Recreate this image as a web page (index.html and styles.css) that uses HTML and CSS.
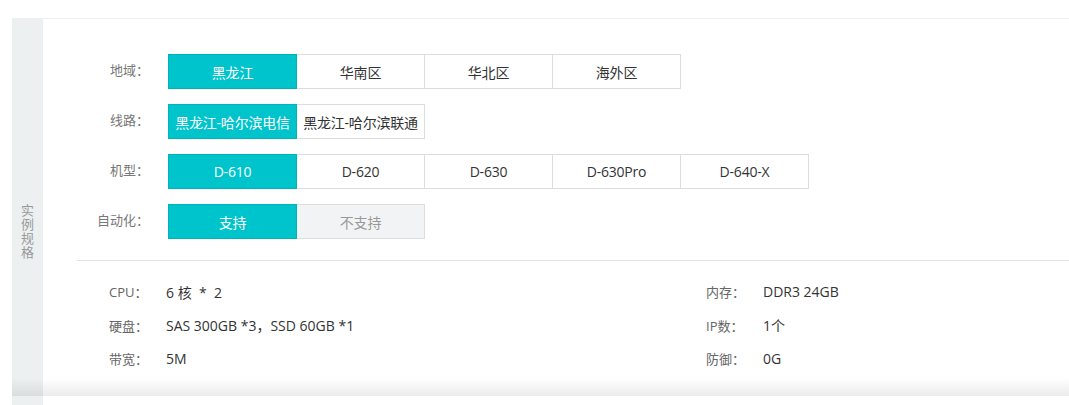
FILE: index.html
```html
<!DOCTYPE html>
<html lang="zh-CN">
  <head>
    <meta charset="UTF-8" />
    <meta name="viewport" content="width=device-width, initial-scale=1.0" />
    <title>实例规格</title>

    <link rel="stylesheet" href="styles.css">
  </head>

  <body>
    <div class="page">
      <div class="panel">
        <div class="side">
          <span class="side-title">实例规格</span>
        </div>
        <div class="main">
          <div class="opt-row">
            <p class="opt-label">地域：</p>
            <div class="opts">
              <div class="opt active">黑龙江</div>
              <div class="opt">华南区</div>
              <div class="opt">华北区</div>
              <div class="opt">海外区</div>
            </div>
          </div>
          <div class="opt-row">
            <p class="opt-label">线路：</p>
            <div class="opts">
              <div class="opt active">黑龙江-哈尔滨电信</div>
              <div class="opt">黑龙江-哈尔滨联通</div>
            </div>
          </div>
          <div class="opt-row">
            <p class="opt-label">机型：</p>
            <div class="opts">
              <div class="opt active">D-610</div>
              <div class="opt">D-620</div>
              <div class="opt">D-630</div>
              <div class="opt">D-630Pro</div>
              <div class="opt">D-640-X</div>
            </div>
          </div>
          <div class="opt-row">
            <p class="opt-label">自动化：</p>
            <div class="opts">
              <div class="opt active">支持</div>
              <div class="opt disabled">不支持</div>
            </div>
          </div>

          <div class="divider"></div>

          <div class="info">
            <div class="info-item"><span class="info-label">CPU：</span><span>6 核 &nbsp;* &nbsp;2</span></div>
            <div class="info-item"><span class="info-label">内存：</span><span>DDR3 24GB</span></div>
            <div class="info-item"><span class="info-label">硬盘：</span><span>SAS 300GB *3，SSD 60GB *1</span></div>
            <div class="info-item"><span class="info-label">IP数：</span><span>1个</span></div>
            <div class="info-item"><span class="info-label">带宽：</span><span>5M</span></div>
            <div class="info-item"><span class="info-label">防御：</span><span>0G</span></div>
          </div>
        </div>
      </div>
      <div class="panel next">
        <div class="side"></div>
        <div class="main"></div>
      </div>
    </div>
  </body>
</html>
```

FILE: styles.css
```css
* {
  margin: 0;
  padding: 0;
  box-sizing: border-box;
}

body {
  background-color: white;
  font-family: "Open Sans", "Noto Sans CJK SC", sans-serif;
  color: #333;
}

.page {
  padding: 18px 0 0 12px;
}

.panel {
  display: flex;
  position: relative;
  border-top: 1px solid #eeeeee;
}

.panel::after {
  content: "";
  position: absolute;
  left: 0;
  right: 0;
  bottom: 0;
  height: 18px;
  background: linear-gradient(rgba(0, 0, 0, 0), rgba(0, 0, 0, 0.08));
}

.panel.next {
  border-top: none;
  height: 10px;
}

.panel.next::after {
  display: none;
}

.side {
  width: 31px;
  background-color: #ecf0f1;
  display: flex;
  flex-direction: column;
  align-items: center;
  padding-top: 185px;
}

.side-title {
  writing-mode: vertical-rl;
  font-size: 13px;
  letter-spacing: 1px;
  color: #999;
}

.main {
  flex: 1;
  padding: 35px 0 20px 0;
}

.opt-row {
  display: flex;
  align-items: center;
  margin-bottom: 15px;
}

.opt-label {
  width: 106px;
  margin-right: 19px;
  text-align: right;
  font-size: 13px;
  color: #777;
  position: relative;
  top: -2px;
}

.opts {
  display: flex;
}

.opt {
  width: 129px;
  height: 35px;
  margin-right: -1px;
  border: 1px solid #dddddd;
  background-color: white;
  display: flex;
  align-items: center;
  justify-content: center;
  font-size: 14px;
  color: #333;
  white-space: nowrap;
  letter-spacing: -0.2px;
  cursor: pointer;
}

.opt.active {
  background-color: #00c4cc;
  border-color: #00b3ba;
  color: white;
  position: relative;
  z-index: 1;
}

.opt.disabled {
  background-color: #f2f3f5;
  color: #999;
  cursor: not-allowed;
}

.divider {
  margin: 21px 0 0 34px;
  border-top: 1px solid #e3e3e3;
}

.info {
  display: grid;
  grid-template-columns: 597px 1fr;
  padding: 14px 0 0 66px;
}

.info-item {
  height: 33.5px;
  display: flex;
  align-items: center;
  font-size: 14px;
  color: #333;
}

.info-label {
  width: 57px;
  font-size: 13px;
  color: #666;
}
```
